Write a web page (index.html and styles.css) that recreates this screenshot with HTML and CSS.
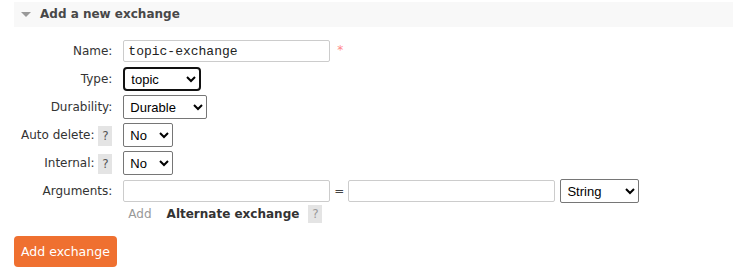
FILE: index.html
```html
<!DOCTYPE html>
<html lang="en">
<head>
  <meta charset="UTF-8">
  <title>Add a new exchange</title>
  <link rel="stylesheet" href="styles.css">
</head>
<body>
  <div class="section">
    <h2><span class="arrow"></span>Add a new exchange</h2>

    <form class="hider">
      <table class="form">
        <tr>
          <th><label>Name:</label></th>
          <td><input type="text" class="name" value="topic-exchange"><span class="mand">*</span></td>
        </tr>
        <tr>
          <th><label>Type:</label></th>
          <td>
            <select class="type focused">
              <option>topic</option>
            </select>
          </td>
        </tr>
        <tr>
          <th><label>Durability:</label></th>
          <td>
            <select class="durable">
              <option>Durable</option>
            </select>
          </td>
        </tr>
        <tr>
          <th><label>Auto delete:</label> <span class="help">?</span></th>
          <td>
            <select class="yesno">
              <option>No</option>
            </select>
          </td>
        </tr>
        <tr>
          <th><label>Internal:</label> <span class="help">?</span></th>
          <td>
            <select class="yesno">
              <option>No</option>
            </select>
          </td>
        </tr>
        <tr>
          <th><label>Arguments:</label></th>
          <td>
            <div class="multifield">
              <input type="text" class="arg">
              <span class="eq">=</span>
              <input type="text" class="arg">
              <select class="argtype">
                <option>String</option>
              </select>
            </div>
            <div class="arg-links">
              <span class="add">Add</span>
              <span class="alt">Alternate exchange</span>
              <span class="help">?</span>
            </div>
          </td>
        </tr>
      </table>
      <button type="button" class="submit">Add exchange</button>
    </form>
  </div>
</body>
</html>
```

FILE: styles.css
```css
body {
  margin: 0;
  font-family: "DejaVu Sans", Verdana, sans-serif;
  font-size: 12px;
  color: #484848;
  background: #fff;
}

.section {
  margin: 2px 0 0 14px;
}

h2 {
  margin: 0;
  height: 25px;
  line-height: 25px;
  padding-left: 7px;
  background: #f8f8f8;
  font-size: 12px;
  font-weight: bold;
  color: #484848;
  display: flex;
  align-items: center;
}

.arrow {
  width: 0;
  height: 0;
  border-left: 5px solid transparent;
  border-right: 5px solid transparent;
  border-top: 5px solid #999;
  margin-right: 9px;
}

.hider {
  padding-top: 10px;
}

table.form {
  border-collapse: separate;
  border-spacing: 0;
  margin-left: 7px;
}

table.form th {
  text-align: right;
  font-weight: normal;
  color: #333;
  padding: 2px 10px 2px 0;
  white-space: nowrap;
  vertical-align: top;
  line-height: 24px;
}

table.form td {
  padding: 2px 0 2px 1px;
  vertical-align: top;
}

input[type=text] {
  box-sizing: border-box;
  height: 22px;
  border: 1px solid #ccc;
  border-radius: 2px;
  padding: 1px 4px;
  margin: 1px 0;
  font-family: "Liberation Mono", monospace;
  font-size: 13px;
  color: #222;
  vertical-align: middle;
}

input.name,
input.arg {
  width: 207px;
}

.mand {
  color: #f88;
  font-size: 12px;
  margin-left: 7px;
  vertical-align: top;
  position: relative;
  top: 4px;
}

select {
  box-sizing: border-box;
  height: 24px;
  border: 1px solid #767676;
  border-radius: 2px;
  background: #fff;
  font-family: "Liberation Sans", Arial, sans-serif;
  font-size: 13px;
  color: #000;
  padding: 0 2px;
  vertical-align: middle;
}

select.focused {
  border: 2px solid #111;
  border-radius: 4px;
}

select.type { width: 78px; }
select.durable { width: 84px; }
select.yesno { width: 50px; }
select.argtype { width: 79px; margin-left: 1px; }

.help {
  display: inline-block;
  width: 14px;
  height: 20px;
  line-height: 20px;
  text-align: center;
  background: #e4e4e4;
  color: #555;
  font-size: 12px;
  vertical-align: middle;
}

.multifield {
  display: flex;
  align-items: center;
  gap: 4px;
}

.eq {
  color: #444;
}

.arg-links {
  display: flex;
  align-items: center;
  padding: 2px 0 0 5px;
}

.add {
  color: #999;
}

.alt {
  font-weight: bold;
  color: #333;
  margin: 0 9px 0 15px;
}

.arg-links .help {
  color: #999;
  height: 18px;
  line-height: 18px;
}

.submit {
  margin-top: 11px;
  background: #ef7030;
  color: #fff;
  border: none;
  border-radius: 4px;
  padding: 0 7px;
  height: 31px;
  white-space: nowrap;
  font-family: "DejaVu Sans", Verdana, sans-serif;
  font-size: 12.5px;
  cursor: pointer;
}
```
